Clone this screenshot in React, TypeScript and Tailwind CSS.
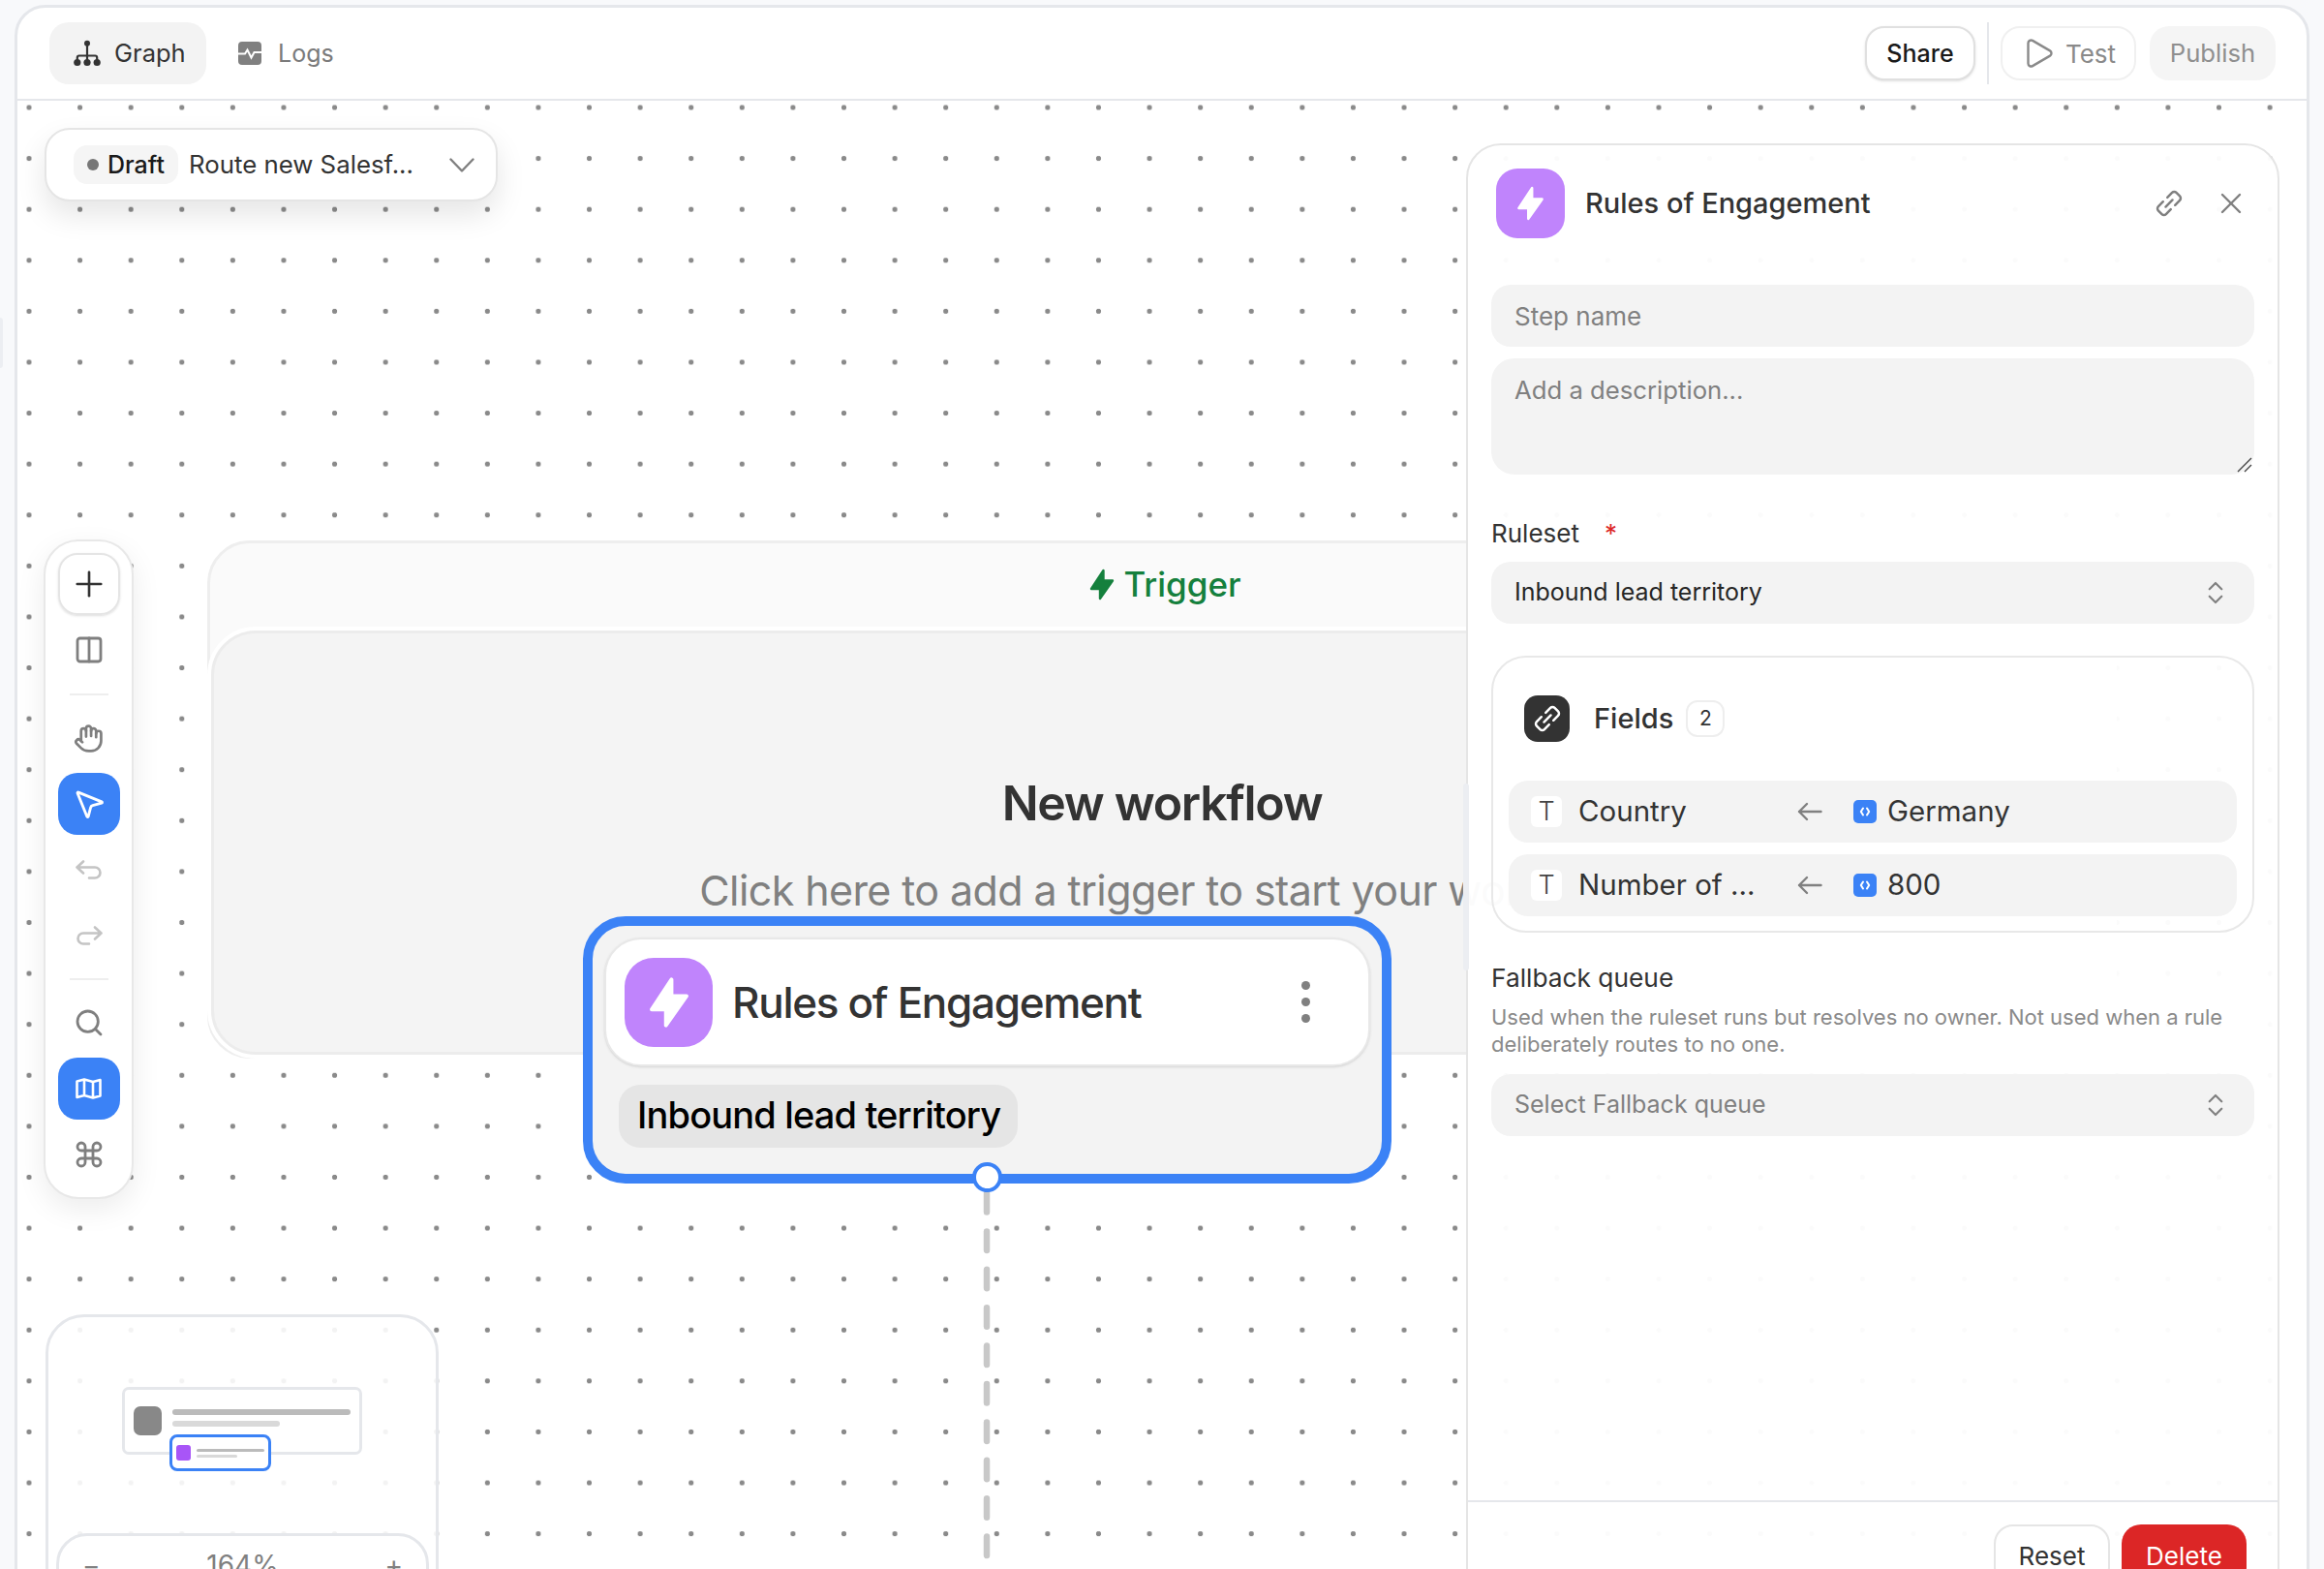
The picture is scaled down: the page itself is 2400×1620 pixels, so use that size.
import {
  ChevronsUpDown,
  Columns2,
  Command,
  Hand,
  MousePointer2,
  Play,
  Plus,
  Search,
  X,
} from "lucide-react";
import type { ReactNode } from "react";

const GraphIcon = () => (
  <svg width="28" height="28" viewBox="0 0 28 28" fill="none" className="text-[#333333]">
    <circle cx="14" cy="3.8" r="3" fill="currentColor" />
    <circle cx="3.8" cy="23.5" r="3.6" fill="currentColor" />
    <circle cx="14" cy="23.5" r="3.6" fill="currentColor" />
    <circle cx="24.2" cy="23.5" r="3.6" fill="currentColor" />
    <path d="M14 6v15M3.8 21v-2.5a2 2 0 0 1 2-2h16.4a2 2 0 0 1 2 2V21" stroke="currentColor" strokeWidth="2.2" />
  </svg>
);

const LogsIcon = () => (
  <svg width="24" height="24" viewBox="0 0 24 24" fill="none">
    <rect width="24" height="24" rx="4" fill="#808080" />
    <path d="M0 12.5h7l2.5-4 4 8 3-5.5H24" stroke="#ffffff" strokeWidth="2" />
  </svg>
);

const CodeIcon = () => (
  <svg width="14" height="14" viewBox="0 0 14 14" fill="none" stroke="#ffffff" strokeWidth="2" strokeLinecap="round" strokeLinejoin="round">
    <path d="M5 3.5 2.8 7 5 10.5M9 3.5 11.2 7 9 10.5" />
  </svg>
);

const Bolt = ({ width, height, color }: { width: number; height: number; color: string }) => (
  <svg width={width} height={height} viewBox="0 0 26 33" fill={color} stroke={color} strokeWidth="2.4" strokeLinejoin="round">
    <path d="M14.5 2v10.5H24L11 31V21H2z" />
  </svg>
);

const LinkIcon = ({ size, color, weight }: { size: number; color: string; weight: number }) => (
  <svg width={size} height={size} viewBox="0 0 24 24" fill="none" stroke={color} strokeWidth={weight} strokeLinecap="round" strokeLinejoin="round" className="-rotate-45">
    <path d="M9.5 16.5H4a2.5 2.5 0 0 1-2.5-2.5v-4A2.5 2.5 0 0 1 4 7.5h5.5M14.5 7.5H20a2.5 2.5 0 0 1 2.5 2.5v4a2.5 2.5 0 0 1-2.5 2.5h-5.5M8 12h8" />
  </svg>
);

const MapGlyph = () => (
  <svg width="27" height="22" viewBox="0 0 27 22" fill="none" stroke="currentColor" strokeWidth="2.6" strokeLinecap="round" strokeLinejoin="round">
    <path d="M1.5 3.5 9 1.5l9 2.5 7.5-2v16.5L18 20.5 9 18l-7.5 2zM9 1.5V18M18 4v16.5" />
  </svg>
);

const UndoGlyph = ({ flip }: { flip?: boolean }) => (
  <svg width="28" height="21" viewBox="0 0 28 21" fill="none" stroke="#c4c4c4" strokeWidth="2.6" strokeLinecap="round" strokeLinejoin="round" className={flip ? "-scale-x-100" : ""}>
    <path d="M8 1.5 1.5 7.5 8 13.5M1.5 7.5H20a5.5 5.5 0 0 1 0 11h-6" />
  </svg>
);

const ToolBtn = ({ children, active, outlined }: { children: ReactNode; active?: boolean; outlined?: boolean }) => (
  <div
    className={`flex h-[64px] w-[64px] items-center justify-center rounded-[20px] ${
      active ? "bg-[#3b82f6] text-white" : ""
    } ${outlined ? "border-2 border-[#e5e5e5] shadow-sm" : ""}`}
  >
    {children}
  </div>
);

const FieldRow = ({ name, value }: { name: string; value: string }) => (
  <div className="flex h-[64px] items-center rounded-[20px] bg-[#f3f3f3] pl-[23px]">
    <div className="flex h-[32px] w-[32px] items-center justify-center rounded-[6px] bg-white text-[27px] font-light text-[#444444]">T</div>
    <span className="-mt-[2px] ml-[17px] w-[226px] text-[29.5px] text-[#333333]">{name}</span>
    <svg width="26" height="20" viewBox="0 0 26 20" fill="none" stroke="#808080" strokeWidth="2.4" strokeLinecap="round" strokeLinejoin="round">
      <path d="M24.5 10H2M10 2 2 10l8 8" />
    </svg>
    <div className="ml-[32px] flex h-[24px] w-[24px] items-center justify-center rounded-[5px] bg-[#3b82f6]">
      <CodeIcon />
    </div>
    <span className="-mt-[2px] ml-[11px] text-[29.5px] text-[#333333]">{value}</span>
  </div>
);

const SelectBox = ({ label, muted }: { label: string; muted?: boolean }) => (
  <div className="flex h-[64px] items-center justify-between rounded-[20px] bg-[#f3f3f3] pl-[24px] pr-[25px]">
    <span className={`text-[25px] ${muted ? "text-[#808080]" : "text-[#262626]"}`}>{label}</span>
    <ChevronsUpDown size={30} strokeWidth={1.7} className="text-[#808080]" />
  </div>
);

const Toolbar = () => (
  <div className="absolute left-[27px] top-[453px] flex w-[93px] flex-col items-center gap-[4px] rounded-[36px] border-2 border-[#e8e8e8] bg-white py-[12px] text-[#7f7f7f] shadow-[0_10px_30px_rgba(0,0,0,0.08)]">
    <ToolBtn outlined>
      <Plus size={42} strokeWidth={1.5} className="text-[#333333]" />
    </ToolBtn>
    <ToolBtn>
      <Columns2 size={32} strokeWidth={2.1} />
    </ToolBtn>
    <div className="my-[8.5px] h-[2px] w-[40px] bg-[#eeeeee]" />
    <ToolBtn>
      <Hand size={31} strokeWidth={2.1} />
    </ToolBtn>
    <ToolBtn active>
      <MousePointer2 size={36} strokeWidth={1.9} />
    </ToolBtn>
    <ToolBtn>
      <UndoGlyph />
    </ToolBtn>
    <ToolBtn>
      <UndoGlyph flip />
    </ToolBtn>
    <div className="my-[8px] h-[2px] w-[40px] bg-[#eeeeee]" />
    <ToolBtn>
      <Search size={32} strokeWidth={2.1} />
    </ToolBtn>
    <ToolBtn active>
      <MapGlyph />
    </ToolBtn>
    <ToolBtn>
      <Command size={32} strokeWidth={2.1} />
    </ToolBtn>
  </div>
);

const Minimap = () => (
  <div className="absolute left-[29px] top-[1253px] h-[400px] w-[406px] rounded-[40px] border-[3px] border-[#e5e7eb] bg-white/90">
    {/* tiny copies of the nodes, their place on the map is the content */}
    <div className="absolute left-[76px] top-[72px] flex h-[70px] w-[248px] items-start gap-[11px] rounded-[7px] border-[3px] border-[#e5e7eb] bg-white pl-[9px] pt-[17px]">
      <div className="h-[30px] w-[29px] rounded-[7px] bg-[#888888]" />
      <div className="flex flex-col gap-[6px] pt-[3px]">
        <div className="h-[6px] w-[184px] rounded-full bg-[#bbbbbb]" />
        <div className="h-[6px] w-[111px] rounded-full bg-[#d9d9d9]" />
      </div>
    </div>
    <div className="absolute left-[125px] top-[121px] flex h-[38px] w-[105px] items-center gap-[6px] rounded-[8px] border-[3px] border-[#3b82f6] bg-white pl-[4px]">
      <div className="h-[16px] w-[15px] rounded-[3px] bg-[#a855f7]" />
      <div className="flex flex-col gap-[3px]">
        <div className="h-[3px] w-[70px] rounded-full bg-[#bbbbbb]" />
        <div className="h-[3px] w-[42px] rounded-full bg-[#d9d9d9]" />
      </div>
    </div>
    <div className="absolute left-[8px] top-[223px] flex h-[100px] w-[385px] items-start justify-between rounded-[32px] border-[3px] border-[#e5e7eb] bg-white px-[24px] pt-[9px] text-[28px] text-[#808080]">
      <span>−</span>
      <span>164%</span>
      <span>+</span>
    </div>
  </div>
);

const TriggerGroup = () => (
  <div className="absolute left-[196px] top-[454px] flex h-[535px] w-[1972px] flex-col rounded-[44px] border-[3px] border-[#eeeeee] bg-[#fafafa]">
    <div className="flex h-[86px] shrink-0 items-center justify-center gap-[9px] pb-[1px] pl-[7px] text-[#15803d]">
      <Bolt width={26} height={33} color="#15803d" />
      <span className="text-[35px] font-medium">Trigger</span>
    </div>
    <div className="-mx-[3px] -mb-[3px] flex-1 rounded-[50px] border-[4px] border-white bg-white">
      <div className="flex h-full flex-col items-center rounded-[46px] border-[3px] border-[#ececec] bg-[#f4f4f4] pt-[145px]">
        <h1 className="text-[50px] font-semibold leading-[60px] tracking-[-1.3px] text-[#333333]">New workflow</h1>
        <p className="mt-[33px] whitespace-nowrap text-[43px] leading-[54px] tracking-[-0.6px] text-[#808080]">
          Click here to add a trigger to start your workflow
        </p>
      </div>
    </div>
  </div>
);

const SelectedNode = () => (
  <div className="absolute left-[584px] top-[842px] h-[276px] w-[835px] rounded-[44px] border-[10px] border-[#3b82f6] bg-[#f3f3f3] px-[12px] pt-[12px]">
    <div className="flex h-[133px] items-center rounded-[38px] border-2 border-[#e8e8e8] bg-white pl-[19px] pr-[60px] shadow-sm">
      <div className="flex h-[92px] w-[91px] items-center justify-center rounded-[30px] bg-[#c084fc]">
        <Bolt width={44} height={54} color="#ffffff" />
      </div>
      <span className="ml-[20px] flex-1 text-[44px] font-medium tracking-[-1.3px] text-[#333333]">Rules of Engagement</span>
      <div className="flex flex-col gap-[8px]">
        <div className="h-[9px] w-[9px] rounded-full bg-[#808080]" />
        <div className="h-[9px] w-[9px] rounded-full bg-[#808080]" />
        <div className="h-[9px] w-[9px] rounded-full bg-[#808080]" />
      </div>
    </div>
    <div className="ml-[15px] mt-[19px] flex h-[65px] w-[412px] items-center rounded-[22px] bg-[#e5e5e5] pl-[19px]">
      <span className="-mt-[2px] whitespace-nowrap text-[38px] font-medium tracking-[-0.85px] text-black">Inbound lead territory</span>
    </div>
  </div>
);

const SidePanel = () => (
  <div className="absolute left-[1496px] top-[44px] flex h-[1510px] w-[840px] flex-col rounded-[36px] border-2 border-[#e5e5e5] bg-white/[0.97]">
    <div className="flex-1 px-[24px] pt-[24px]">
      <div className="flex items-center pl-[5px] pr-[6px]">
        <div className="flex h-[72px] w-[71px] items-center justify-center rounded-[22px] bg-[#c084fc]">
          <Bolt width={29} height={36} color="#ffffff" />
        </div>
        <span className="ml-[21px] flex-1 text-[29px] font-medium text-[#333333]">Rules of Engagement</span>
        <LinkIcon size={30} color="#808080" weight={2} />
        <X size={36} strokeWidth={1.6} className="ml-[31px] text-[#808080]" />
      </div>
      <div className="mt-[48px] flex h-[64px] items-center rounded-[20px] bg-[#f3f3f3] pl-[24px] text-[26px] text-[#808080]">Step name</div>
      <div className="relative mt-[12px] h-[120px] rounded-[24px] bg-[#f3f3f3] pl-[24px] pt-[14px] text-[25.7px] text-[#808080]">
        Add a description...
        <svg width="16" height="16" viewBox="0 0 16 16" fill="none" stroke="#444444" strokeWidth="1.4" className="absolute bottom-[2px] right-[2px]">
          <path d="M1 15 15 1M8 15l7-7" />
        </svg>
      </div>
      <div className="mt-[45px] flex h-[30px] items-center text-[26px] text-[#333333]">
        Ruleset
        <span className="ml-[26px] text-[#dc2626]">*</span>
      </div>
      <div className="mt-[15px]">
        <SelectBox label="Inbound lead territory" />
      </div>
      <div className="mt-[33px] rounded-[36px] border-2 border-[#e8e8e8] px-[16px] pb-[15px]">
        <div className="flex h-[127px] items-center pb-[2px] pl-[16px]">
          <div className="flex h-[48px] w-[47px] items-center justify-center rounded-[14px] bg-[#333333]">
            <LinkIcon size={30} color="#ffffff" weight={2} />
          </div>
          <span className="ml-[25px] text-[29px] font-medium text-[#333333]">Fields</span>
          <span className="ml-[13px] flex h-[38px] w-[40px] items-center justify-center rounded-[12px] border-2 border-[#eeeeee] text-[21px] text-[#333333]">2</span>
        </div>
        <div className="flex flex-col gap-[12px]">
          <FieldRow name="Country" value="Germany" />
          <FieldRow name="Number of ..." value="800" />
        </div>
      </div>
      <div className="mt-[30px] text-[26.3px] leading-[34px] text-[#333333]">Fallback queue</div>
      <p className="mt-[9px] text-[22px] leading-[28px] text-[#8a8a8a]">
        Used when the ruleset runs but resolves no owner. Not used when a rule deliberately routes to no one.
      </p>
      <div className="mt-[17px]">
        <SelectBox label="Select Fallback queue" muted />
      </div>
    </div>
    <div className="flex h-[107px] shrink-0 justify-end gap-[12px] border-t-2 border-[#e5e7eb] pr-[32px] pt-[23px]">
      <div className="flex h-[64px] w-[120px] items-center justify-center rounded-[20px] border-2 border-[#e5e5e5] bg-white text-[26px] text-[#333333]">Reset</div>
      <div className="flex h-[64px] w-[129px] items-center justify-center rounded-[20px] bg-[#dc2626] text-[26px] text-white">Delete</div>
    </div>
  </div>
);

export default function App() {
  return (
    <div className="relative h-[1620px] overflow-hidden bg-[#f8f9fb] pl-[15px] pr-[15px] pt-[5px] [font-family:Inter,sans-serif]">
      <div className="absolute left-0 top-[328px] h-[52px] w-[3px] rounded-r bg-[#eceef2]" />
      <div className="flex h-[1700px] flex-col overflow-hidden rounded-[32px] border-[3px] border-[#e5e7eb] bg-white">
        <header className="flex h-[96px] shrink-0 items-center border-b-2 border-[#e5e7eb] pl-[33px] pr-[32px]">
          <div className="flex h-[64px] w-[162px] items-center gap-[14px] rounded-[20px] bg-[#f3f3f3] pl-[25px] text-[25.5px] text-[#333333]">
            <GraphIcon />
            <span className="pt-[1px]">Graph</span>
          </div>
          <div className="ml-[33px] flex items-center gap-[17px] text-[25px] text-[#7b7b7b]">
            <LogsIcon />
            <span className="pt-[1px]">Logs</span>
          </div>
          <div className="ml-auto flex items-center">
            <div className="flex h-[56px] w-[114px] items-center justify-center rounded-[20px] border-2 border-[#e0e0e0] bg-white pt-[1px] text-[25px] font-medium text-[#1a1a1a] shadow-sm">Share</div>
            <div className="mx-[12px] h-[64px] w-[2px] bg-[#e5e7eb]" />
            <div className="flex h-[56px] w-[140px] items-center justify-center gap-[10px] rounded-[20px] border-2 border-[#f0f0f0] text-[26px] text-[#8a8a8a]">
              <Play size={36} strokeWidth={1.6} />
              <span className="pt-[1px]">Test</span>
            </div>
            <div className="ml-[14px] flex h-[56px] w-[130px] items-center justify-center rounded-[20px] bg-[#f5f5f5] pt-[1px] text-[25.7px] text-[#8f8f8f]">Publish</div>
          </div>
        </header>
        <main className="relative flex-1 overflow-hidden bg-[radial-gradient(circle,#8a8a8a_2.3px,transparent_3px)] bg-[length:52.6px_52.6px] bg-[position:-14.3px_-19.3px]">
          <TriggerGroup />
          <SelectedNode />
          <svg width="8" height="384" className="absolute left-[997px] top-[1124px]">
            <line x1="4" y1="4" x2="4" y2="382" stroke="#c8c8c8" strokeWidth="6.5" strokeLinecap="round" strokeDasharray="19.5 19.9" />
          </svg>
          <div className="absolute left-[986px] top-[1096px] h-[31px] w-[31px] rounded-full border-[4px] border-[#3b82f6] bg-white" />
          <div className="absolute left-[28px] top-[28px] flex h-[76px] w-[468px] items-center rounded-[26px] border-2 border-[#e5e5e5] bg-white pl-[28px] pr-[22px] shadow-[0_14px_30px_rgba(0,0,0,0.1)]">
            <div className="flex h-[40px] w-[108px] items-center gap-[9px] rounded-[14px] bg-[#f5f5f5] pl-[14px]">
              <div className="h-[12px] w-[12px] rounded-full bg-[#777777]" />
              <span className="pt-[1px] text-[25px] font-medium text-[#1a1a1a]">Draft</span>
            </div>
            <span className="ml-[11px] flex-1 whitespace-nowrap pt-[1px] text-[25.8px] text-[#333333]">Route new Salesf...</span>
            <svg width="26" height="15" viewBox="0 0 26 15" fill="none" stroke="#808080" strokeWidth="2.4" strokeLinecap="round" strokeLinejoin="round">
              <path d="M1.5 1.5 13 13.5 24.5 1.5" />
            </svg>
          </div>
          <Toolbar />
          <Minimap />
          <SidePanel />
          <div className="absolute left-[1493px] top-[705px] h-[193px] w-[6px] rounded-full bg-[#eceef2]" />
        </main>
      </div>
    </div>
  );
}
